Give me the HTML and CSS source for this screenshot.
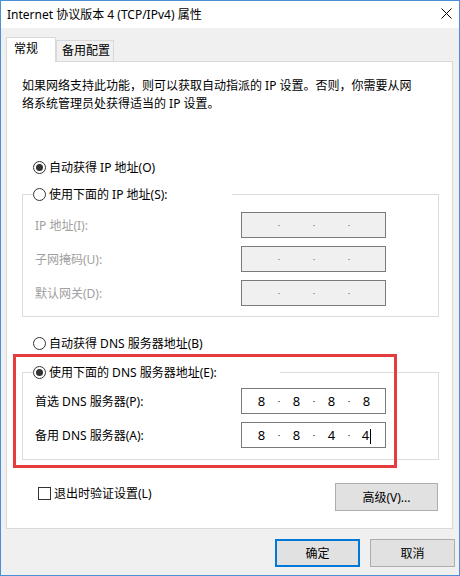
FILE: index.html
```html
<!DOCTYPE html>
<html lang="zh-CN">
<head>
    <meta charset="UTF-8">
    <meta name="viewport" content="width=device-width, initial-scale=1.0">
    <title>Internet 协议版本 4 (TCP/IPv4) 属性</title>
    <link rel="stylesheet" href="styles.css">
</head>
<body>
    <div class="window">
        <div class="titlebar">
            <span class="title">Internet 协议版本 4 (TCP/IPv4) 属性</span>
            <svg class="close" width="11" height="11" viewBox="0 0 11 11">
                <path d="M0.5 0.5 L10.5 10.5 M10.5 0.5 L0.5 10.5" stroke="#000" stroke-width="1" fill="none"/>
            </svg>
        </div>
        <div class="tabs">
            <div class="tab active">常规</div>
            <div class="tab">备用配置</div>
        </div>
        <div class="panel">
            <p class="desc">如果网络支持此功能，则可以获取自动指派的 IP 设置。否则，你需要从网<br>络系统管理员处获得适当的 IP 设置。</p>

            <div class="radio-row auto-ip"><span class="radio checked"></span>自动获得 IP 地址(O)</div>
            <div class="group ip-group">
                <div class="radio-row group-head" style="width:199px"><span class="radio"></span>使用下面的 IP 地址(S):</div>
                <div class="field-row first disabled">
                    <label>IP 地址(I):</label>
                    <div class="ipbox"><span class="oct"></span><span class="dot">·</span><span class="oct"></span><span class="dot">·</span><span class="oct"></span><span class="dot">·</span><span class="oct"></span></div>
                </div>
                <div class="field-row disabled">
                    <label>子网掩码(U):</label>
                    <div class="ipbox"><span class="oct"></span><span class="dot">·</span><span class="oct"></span><span class="dot">·</span><span class="oct"></span><span class="dot">·</span><span class="oct"></span></div>
                </div>
                <div class="field-row disabled">
                    <label>默认网关(D):</label>
                    <div class="ipbox"><span class="oct"></span><span class="dot">·</span><span class="oct"></span><span class="dot">·</span><span class="oct"></span><span class="dot">·</span><span class="oct"></span></div>
                </div>
            </div>

            <div class="radio-row auto-dns"><span class="radio"></span>自动获得 DNS 服务器地址(B)</div>
            <div class="group dns-group">
                <div class="radio-row group-head" style="width:247px"><span class="radio checked"></span>使用下面的 DNS 服务器地址(E):</div>
                <div class="field-row first">
                    <label>首选 DNS 服务器(P):</label>
                    <div class="ipbox"><span class="oct">8</span><span class="dot">·</span><span class="oct">8</span><span class="dot">·</span><span class="oct">8</span><span class="dot">·</span><span class="oct">8</span></div>
                </div>
                <div class="field-row">
                    <label>备用 DNS 服务器(A):</label>
                    <div class="ipbox"><span class="oct">8</span><span class="dot">·</span><span class="oct">8</span><span class="dot">·</span><span class="oct">4</span><span class="dot">·</span><span class="oct">4<span class="caret"></span></span></div>
                </div>
            </div>

            <div class="bottom-row">
                <div class="check-row"><span class="check"></span>退出时验证设置(L)</div>
                <button class="btn advanced">高级(V)...</button>
            </div>
        </div>
        <div class="footer">
            <button class="btn default">确定</button>
            <button class="btn">取消</button>
        </div>
        <div class="highlight"></div>
    </div>
</body>
</html>
```

FILE: styles.css
```css
body {
    margin: 0;
    font-family: "Noto Sans", "Noto Sans CJK SC", sans-serif;
    font-size: 12px;
    color: #000;
    background: #fff;
}
.window {
    position: relative;
    width: 460px;
    height: 576px;
    box-sizing: border-box;
    border: 1px solid #4a90d9;
    background: #f0f0f0;
}
.titlebar {
    height: 27px;
    box-sizing: border-box;
    background: #fff;
    display: flex;
    align-items: center;
    justify-content: space-between;
    padding: 0 7px 2px 6px;
}
.close {
    display: block;
}
.tabs {
    display: flex;
    align-items: flex-end;
    margin: 9px 0 0 5px;
}
.tab {
    box-sizing: border-box;
    height: 21px;
    width: 58px;
    border: 1px solid #d9d9d9;
    border-bottom: none;
    padding: 0 0 0 5px;
    line-height: 20px;
    white-space: nowrap;
    background: #f0f0f0;
}
.tab.active {
    position: relative;
    z-index: 1;
    height: 25px;
    width: 50px;
    padding: 0 0 0 7px;
    line-height: 22px;
    background: #fff;
    margin-bottom: -1px;
}
.panel {
    box-sizing: border-box;
    width: 447px;
    height: 468px;
    margin-left: 5px;
    background: #fff;
    border: 1px solid #d9d9d9;
    padding-left: 15px;
}
.desc {
    margin: 15px 0 0;
    line-height: 18px;
}
.radio-row {
    height: 20px;
    display: flex;
    align-items: center;
    gap: 3px;
    margin-left: 11px;
    white-space: nowrap;
}
.radio {
    width: 13px;
    height: 13px;
    box-sizing: border-box;
    border: 1px solid #333;
    border-radius: 50%;
    background: #fff;
    display: flex;
    align-items: center;
    justify-content: center;
    flex: none;
}
.radio.checked::after {
    content: "";
    width: 7px;
    height: 7px;
    border-radius: 50%;
    background: #333;
}
.auto-ip {
    margin-top: 44px;
}
.auto-dns {
    margin-top: 16px;
}
.group {
    width: 417px;
    box-sizing: border-box;
    border: 1px solid #dcdcdc;
    padding-bottom: 10px;
}
.ip-group {
    margin-top: 17px;
}
.dns-group {
    margin-top: 19px;
    padding-bottom: 11px;
}
.group-head {
    margin: -11px 0 0 10px;
    background: #fff;
}
.field-row {
    display: flex;
    align-items: center;
    height: 26px;
    padding-left: 12px;
    margin-top: 8px;
}
.dns-group .field-row.first {
    margin-top: 6px;
}
.field-row label {
    width: 206px;
}
.field-row.disabled label {
    color: #a0a0a0;
}
.ipbox {
    box-sizing: border-box;
    width: 145px;
    height: 26px;
    border: 1px solid #7a7a7a;
    background: #fff;
    display: flex;
    align-items: center;
    padding-left: 6px;
    font-size: 13px;
}
.disabled .ipbox {
    background: #f0f0f0;
    color: #6d6d6d;
}
.oct {
    width: 27px;
    text-align: center;
}
.dot {
    width: 8px;
    text-align: center;
    font-size: 9px;
}
.caret {
    display: inline-block;
    width: 1px;
    height: 15px;
    background: #000;
    vertical-align: middle;
    margin-left: 1px;
}
.bottom-row {
    display: flex;
    justify-content: space-between;
    align-items: flex-start;
    width: 416px;
    margin-top: 23px;
}
.check-row {
    display: flex;
    align-items: center;
    gap: 3px;
    height: 20px;
    margin-left: 16px;
}
.check {
    width: 13px;
    height: 13px;
    box-sizing: border-box;
    border: 1px solid #333;
    background: #fff;
}
.btn {
    box-sizing: border-box;
    height: 28px;
    border: 1px solid #adadad;
    background: #e1e1e1;
    font: inherit;
    color: #000;
    padding: 0;
}
.advanced {
    width: 103px;
}
.footer {
    display: flex;
    justify-content: flex-end;
    gap: 10px;
    margin: 10px 4px 0 0;
}
.footer .btn {
    width: 85px;
}
.btn.default {
    border: 2px solid #0078d7;
}
.highlight {
    position: absolute;
    left: 12px;
    top: 353px;
    width: 384px;
    height: 114px;
    box-sizing: border-box;
    border: 3px solid #e53d3d;
}
```
